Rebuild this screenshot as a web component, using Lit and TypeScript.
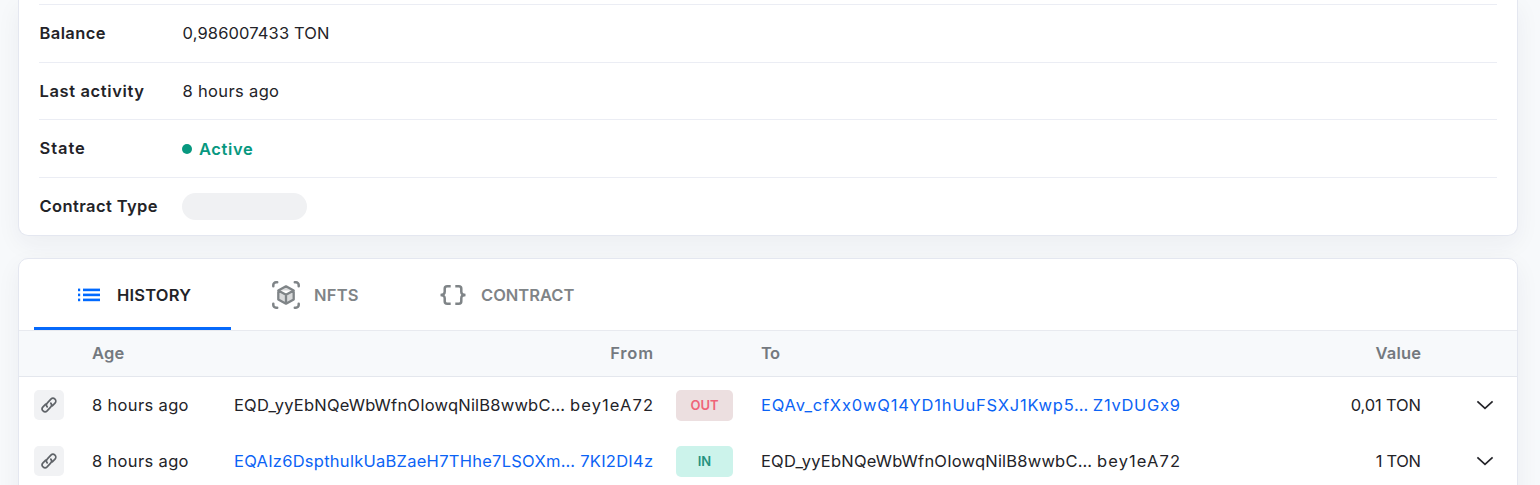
import { LitElement, html, svg, css } from "lit";
import { customElement } from "lit/decorators.js";

/* Label text with its tracking in px. */
type Label = [text: string, tracking: number];

const t = ([text, tracking]: Label, cls = "") =>
  html`<span class="t ${cls}" style="letter-spacing:${tracking}px;margin-right:${-tracking}px">${text}</span>`;

const listIcon = html`<svg width="24" height="24" viewBox="0 0 24 24" fill="#0069ff">
  ${[5.6, 10.6, 15.6].map((y) => svg`<rect x="1" y=${y} width="2.2" height="2.6"/><rect x="6" y=${y} width="17" height="2.6"/>`)}
</svg>`;

const nftIcon = html`<svg width="28" height="28" viewBox="0 0 28 28" fill="none" stroke="#7f8487" stroke-width="2.5" stroke-linecap="round" stroke-linejoin="round">
  <path d="M1.3 5.2V4a2.7 2.7 0 0 1 2.7-2.7h1.2M22.8 1.3H24A2.7 2.7 0 0 1 26.7 4v1.2M26.7 22.8V24a2.7 2.7 0 0 1-2.7 2.7h-1.2M5.2 26.7H4A2.7 2.7 0 0 1 1.3 24v-1.2"/>
  <path fill="#d9dadb" stroke-width="2.3" d="M14 5.3 21.7 9.6v8.8L14 22.7l-7.7-4.3V9.6zM6.3 9.6 14 13.8l7.7-4.2M14 13.8v8.9"/>
</svg>`;

const bracesIcon = html`<svg width="26" height="22" viewBox="0 0 26 22" fill="none" stroke="#7f8487" stroke-width="2.5">
  <path d="M10.7 2.2H7.2a2.5 2.5 0 0 0-2.5 2.5v3.1c0 2-1.2 3.2-4.2 3.2 3 0 4.2 1.2 4.2 3.2v3.1a2.5 2.5 0 0 0 2.5 2.5h3.5M15.3 2.2h3.5a2.5 2.5 0 0 1 2.5 2.5v3.1c0 2 1.2 3.2 4.2 3.2-3 0-4.2 1.2-4.2 3.2v3.1a2.5 2.5 0 0 1-2.5 2.5h-3.5"/>
</svg>`;

const linkIcon = html`<svg width="16" height="16" viewBox="0 0 16 16" fill="none" stroke="#5f6368" stroke-width="1.7" stroke-linecap="round">
  <path d="M6.2 9.9A3 3 0 0 1 6.4 5.9L9.9 2.1a2.85 2.85 0 0 1 4.1 4L11.3 8.9M9.8 6.1A3 3 0 0 1 9.6 10.1L6.1 13.9a2.85 2.85 0 0 1-4.1-4L4.7 7.1"/>
</svg>`;

const chevronIcon = html`<svg class="chevron" width="18" height="10" viewBox="0 0 18 10" fill="none" stroke="#232328" stroke-width="1.7">
  <path d="M1.4 1.4 9 8.4l7.6-7"/>
</svg>`;

/* An address is cut in the middle: its head, then its last characters. */
type Address = [head: Label, tail: Label];
const own: Address = [["EQD_yyEbNQeWbWfnOIowqNilB8wwbC…", 0.2], ["bey1eA72", 1.1]];

const address = ([head, tail]: Address, link: boolean) =>
  html`<div class="address ${link ? "link" : ""}">${t(head)}${t(tail)}</div>`;

const rows: { from: Address; to: Address; out: boolean; value: Label }[] = [
  {
    from: own,
    to: [["EQAv_cfXx0wQ14YD1hUuFSXJ1Kwp5…", 0.8], ["Z1vDUGx9", 0.7]],
    out: true,
    value: ["0,01 TON", -0.15],
  },
  {
    from: [["EQAIz6DspthulkUaBZaeH7THhe7LSOXm…", 0.26], ["7KI2DI4z", 0.25]],
    to: own,
    out: false,
    value: ["1 TON", -0.35],
  },
];

@customElement("app-root")
export class AppRoot extends LitElement {
  static styles = css`
    :host {
      display: block;
      box-sizing: border-box;
      height: 485px;
      overflow: hidden;
      padding: 0 22px 0 18px;
      background: #f7f9fb;
      color: #232328;
      font: 400 16.5px/20px Inter, sans-serif;
    }
    * { box-sizing: border-box; }
    svg { display: block; flex: none; }
    .t { white-space: nowrap; }
    .card {
      background: #fff;
      border: 1px solid #e4e7f0;
      box-shadow: 0 8px 24px rgba(34, 42, 66, 0.055);
    }
    .info {
      height: 236px;
      border-top: 0;
      border-radius: 0 0 10px 10px;
      padding: 4px 20px 0;
    }
    .row {
      display: grid;
      grid-template-columns: 143px 1fr;
      align-items: center;
      height: 57.67px;
      border-top: 1px solid #ebedf4;
      padding-left: 0.5px;
    }
    .name { font-weight: 600; }
    .state {
      display: flex;
      align-items: center;
      gap: 7px;
      padding-top: 1px;
      font-weight: 600;
      color: #07987f;
    }
    .row.status { padding-bottom: 1px; }
    .dot { width: 10px; height: 10px; border-radius: 50%; background: currentColor; margin-left: -0.5px; }
    .skeleton { width: 125px; height: 27px; border-radius: 14px; background: #f0f1f3; margin-left: -0.5px; }
    .history { margin-top: 22px; height: 300px; border-radius: 10px 10px 0 0; }
    .tabs {
      display: flex;
      height: 72px;
      padding-left: 15px;
      border-bottom: 1px solid #e8eaef;
      font-weight: 600;
      color: #7f8487;
    }
    .tab { display: flex; align-items: center; height: 71px; }
    .active { width: 197px; padding-left: 43px; gap: 16px; color: #232328; border-bottom: 3px solid #0669fb; padding-top: 3px; }
    .nfts { width: 168px; padding-left: 41px; gap: 14px; }
    .contract { padding-left: 40.5px; gap: 15.5px; }
    .line {
      display: grid;
      grid-template-columns: 58px 142px 419px 108px 419px 1fr 96px;
      align-items: center;
      height: 56px;
      padding-left: 15px;
    }
    .head {
      height: 46px;
      padding-bottom: 1px;
      background: #f7f9fb;
      border-bottom: 1px solid #e4e7ed;
      font-weight: 600;
      color: #74797f;
    }
    .right { text-align: right; }
    .chip {
      display: grid;
      place-items: center;
      width: 30px;
      height: 30px;
      border-radius: 5px;
      background: #f1f2f4;
    }
    .address { display: flex; justify-content: space-between; }
    .badge {
      width: 57px;
      height: 31px;
      margin: 1px 0 0 23px;
      border-radius: 5px;
      font-size: 13px;
      font-weight: 600;
      line-height: 31px;
      text-align: center;
      background: #ccf3eb;
      color: #26927f;
    }
    .badge.out { background: #ecdfe0; color: #ef6478; }
    .link { color: #0b63f5; }
    .chevron { margin: 0 0 0 55px; }
  `;

  render() {
    return html`
      <section class="card info">
        <div class="row">${t(["Balance", 0.4], "name")}${t(["0,986007433 TON", 0.14])}</div>
        <div class="row">${t(["Last activity", 0.63], "name")}${t(["8 hours ago", 0.34])}</div>
        <div class="row status">
          ${t(["State", 0.95], "name")}
          <div class="state"><i class="dot"></i>${t(["Active", 0.6])}</div>
        </div>
        <div class="row">${t(["Contract Type", 0.4], "name")}<div class="skeleton"></div></div>
      </section>
      <section class="card history">
        <nav class="tabs">
          <div class="tab active">${listIcon}${t(["HISTORY", 0.2])}</div>
          <div class="tab nfts">${nftIcon}${t(["NFTS", 0.25])}</div>
          <div class="tab contract">${bracesIcon}${t(["CONTRACT", 0])}</div>
        </nav>
        <div class="line head">
          <span></span>
          ${t(["Age", 0.25])}
          <div class="right">${t(["From", 0.8])}</div>
          <span></span>
          ${t(["To", -0.7])}
          <div class="right">${t(["Value", 0.2])}</div>
          <span></span>
        </div>
        ${rows.map(
          (r) => html`<div class="line">
            <div class="chip">${linkIcon}</div>
            ${t(["8 hours ago", 0.34])}
            ${address(r.from, !r.out)}
            <div class="badge ${r.out ? "out" : ""}">${r.out ? "OUT" : "IN"}</div>
            ${address(r.to, r.out)}
            <div class="right">${t(r.value)}</div>
            ${chevronIcon}
          </div>`,
        )}
      </section>
    `;
  }
}
